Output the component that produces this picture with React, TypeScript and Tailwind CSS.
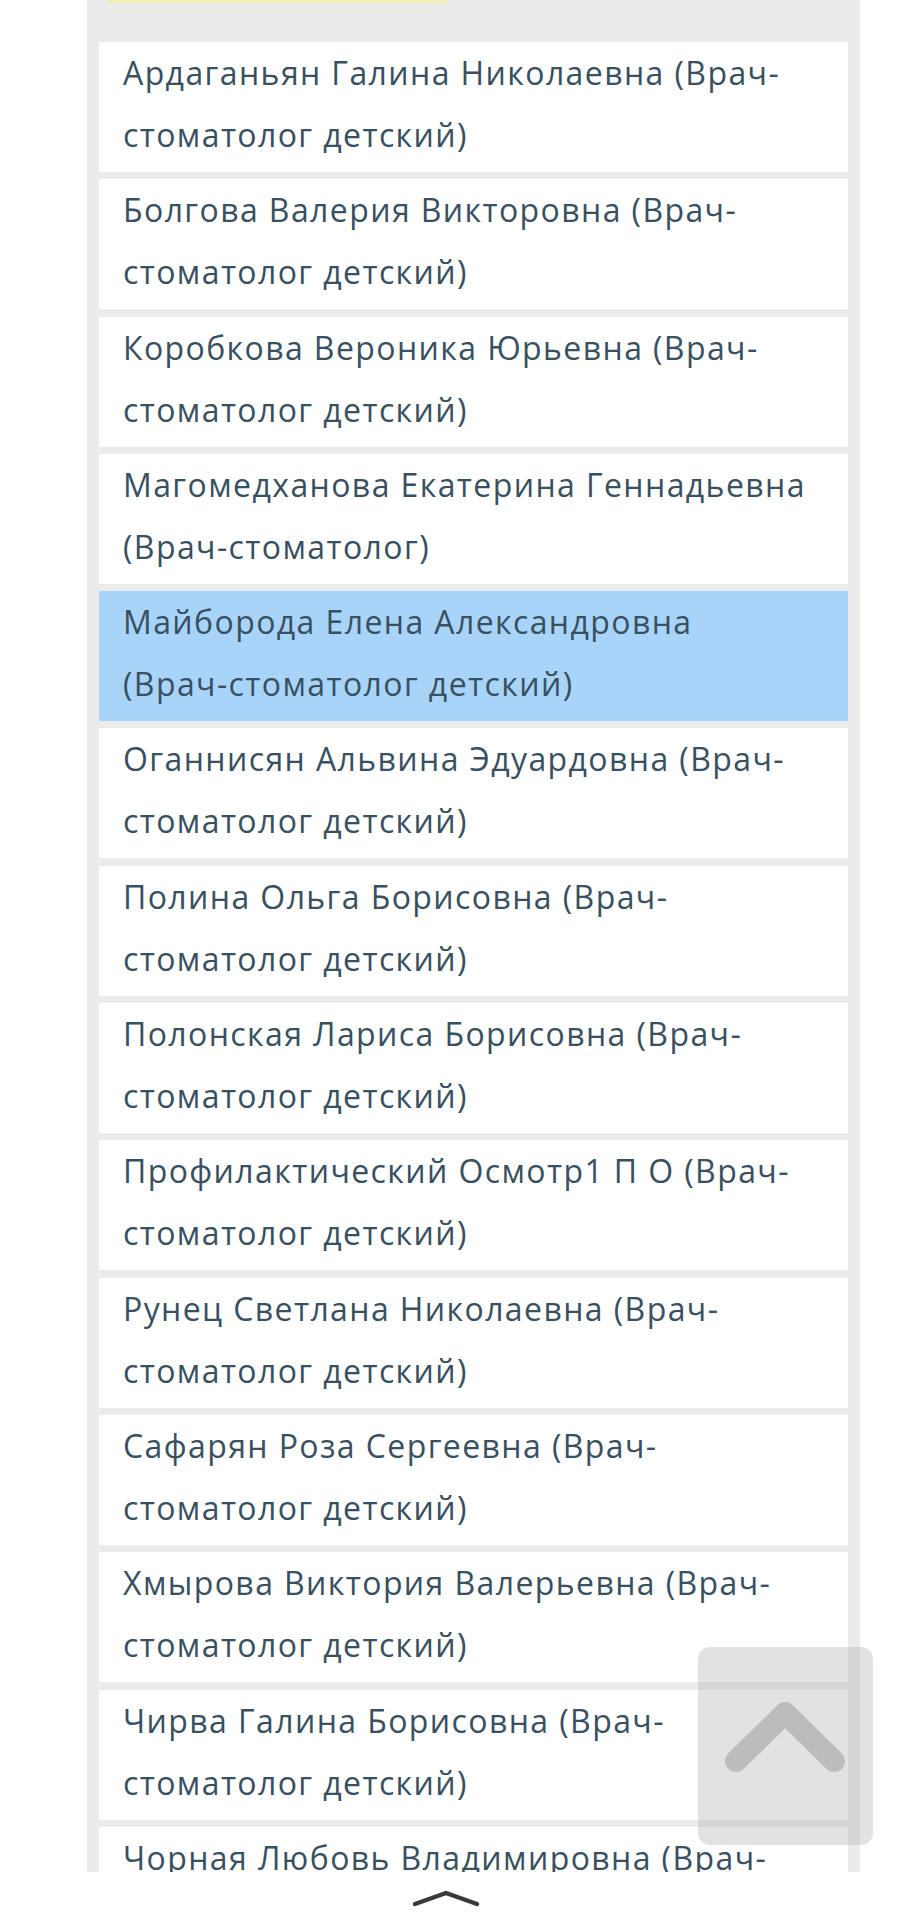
import React from 'react';

interface Doctor {
    lines: [string, string];
    active?: boolean;
}

const doctors: Doctor[] = [
    { lines: ['Ардаганьян Галина Николаевна (Врач-', 'стоматолог детский)'] },
    { lines: ['Болгова Валерия Викторовна (Врач-', 'стоматолог детский)'] },
    { lines: ['Коробкова Вероника Юрьевна (Врач-', 'стоматолог детский)'] },
    { lines: ['Магомедханова Екатерина Геннадьевна', '(Врач-стоматолог)'] },
    { lines: ['Майборода Елена Александровна', '(Врач-стоматолог детский)'], active: true },
    { lines: ['Оганнисян Альвина Эдуардовна (Врач-', 'стоматолог детский)'] },
    { lines: ['Полина Ольга Борисовна (Врач-', 'стоматолог детский)'] },
    { lines: ['Полонская Лариса Борисовна (Врач-', 'стоматолог детский)'] },
    { lines: ['Профилактический Осмотр1 П О (Врач-', 'стоматолог детский)'] },
    { lines: ['Рунец Светлана Николаевна (Врач-', 'стоматолог детский)'] },
    { lines: ['Сафарян Роза Сергеевна (Врач-', 'стоматолог детский)'] },
    { lines: ['Хмырова Виктория Валерьевна (Врач-', 'стоматолог детский)'] },
    { lines: ['Чирва Галина Борисовна (Врач-', 'стоматолог детский)'] },
    { lines: ['Чорная Любовь Владимировна (Врач-', 'стоматолог детский)'] },
];

const DoctorRow: React.FC<Doctor> = ({ lines, active }) => (
    <div
        className={`h-[130px] shrink-0 pl-[24px] text-[32px] leading-[62px] tracking-[1.4px] text-[#38505f] ${
            active ? 'bg-[#a8d4fa]' : 'bg-white'
        }`}
    >
        {lines[0]}
        <br />
        {lines[1]}
    </div>
);

export default function App() {
    return (
        <div className="relative h-[1920px] bg-white" style={{ fontFamily: '"Open Sans", sans-serif' }}>
            <div className="ml-[87px] w-[773px] h-[1872px] overflow-hidden bg-[#ebebeb] px-[12px]">
                <div className="h-[3px] ml-[9px] w-[339px] bg-[#f2efb5]" />
                <div className="mt-[39px] flex flex-col gap-[7.3px]">
                    {doctors.map((d, i) => (
                        <DoctorRow key={i} {...d} />
                    ))}
                </div>
            </div>

            <div className="flex justify-center pt-[16px]">
                <svg width="70" height="20" viewBox="0 0 70 20" className="-translate-x-[2px]">
                    <path d="M3 16 L34 5 L65 16" fill="none" stroke="#3a3a3a" strokeWidth="4.5" strokeLinecap="round" strokeLinejoin="round" />
                </svg>
            </div>

            {/* scroll to top */}
            <div className="absolute left-[698px] top-[1647px] w-[175px] h-[198px] rounded-[12px] bg-[rgba(185,185,185,0.42)] flex items-center justify-center">
                <svg width="140" height="100" viewBox="0 0 140 100" className="-mt-[14px] -ml-[4px]">
                    <path d="M22 72 L71 24 L120 72" fill="none" stroke="#bcbcbc" strokeWidth="22" strokeLinecap="round" strokeLinejoin="round" />
                </svg>
            </div>
        </div>
    );
}
